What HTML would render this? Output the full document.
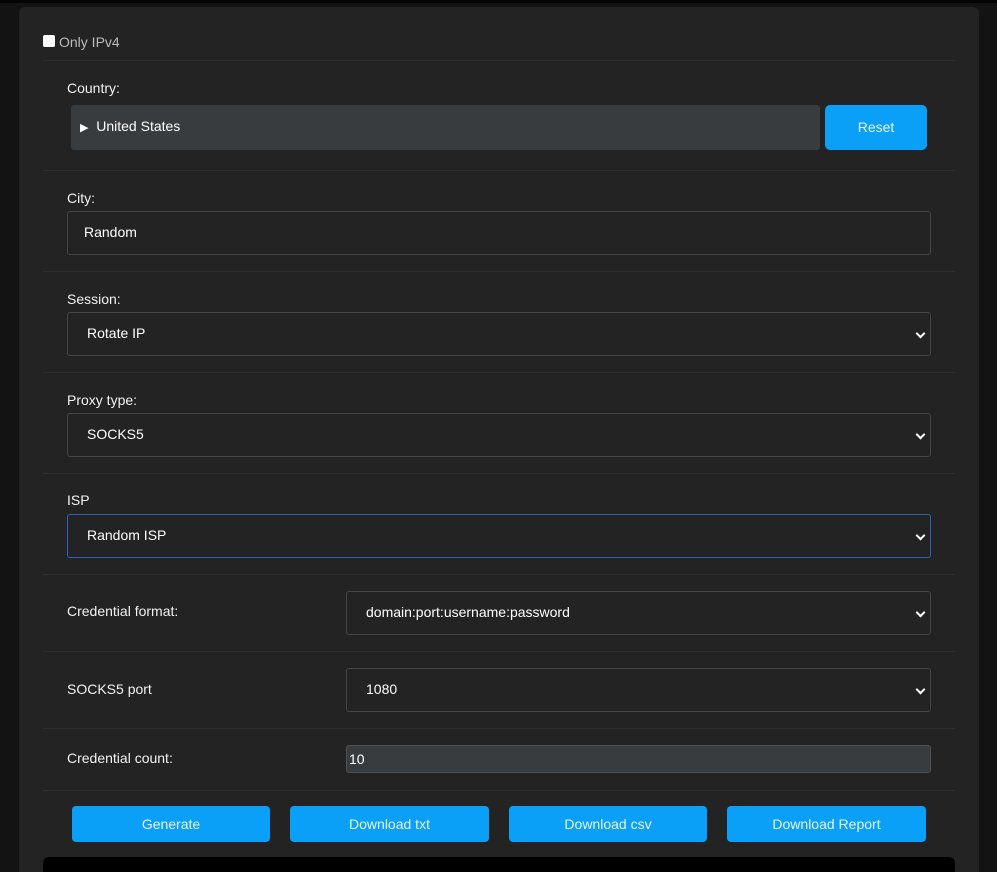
<!DOCTYPE html>
<html style="overflow:hidden;height:872px"><head><style>
*{box-sizing:border-box;margin:0;padding:0}
body{width:997px;height:872px;background:#131313;position:relative;overflow:hidden;font-family:"Liberation Sans",sans-serif;font-size:14px;color:#fff}
.a{position:absolute}
.panel{left:19px;top:7px;width:960px;height:865px;background:#232323;border-radius:6px 6px 0 0}
.line{left:43px;width:912px;height:1px;background:#2e2e2e}
.lbl{left:67px;line-height:16px;color:#f2f2f2}
.box{border:1px solid #454545;border-radius:3px;background:#232323;line-height:41px;padding-left:19px}
.sel::after{content:"";position:absolute;right:6px;top:17px;width:5px;height:5px;border-right:2px solid #fff;border-bottom:2px solid #fff;transform:rotate(45deg)}
.btn{background:#0aa0f7;border-radius:4px;text-align:center;color:#e8f6ff}
</style></head><body>
<div class="a" style="left:0;top:0;width:997px;height:3px;background:#050505"></div>
<div class="a panel"></div>
<div class="a" style="left:43px;top:35px;width:12px;height:12px;background:#fff;border-radius:2px"></div>
<div class="a" style="left:59px;top:34px;color:#bbb;line-height:16px">Only IPv4</div>
<div class="a line" style="top:60px"></div>
<div class="a lbl" style="top:80px">Country:</div>
<div class="a" style="left:71px;top:105px;width:749px;height:45px;background:#393c3f;border-radius:3px;line-height:43px;padding-left:9px"><span style="font-size:11px">▶</span>&nbsp; United States</div>
<div class="a btn" style="left:825px;top:105px;width:102px;height:45px;line-height:45px;border-radius:5px">Reset</div>
<div class="a line" style="top:170px"></div>
<div class="a lbl" style="top:190px">City:</div>
<div class="a box" style="left:67px;top:211px;width:864px;height:44px;padding-left:16px">Random</div>
<div class="a line" style="top:271px"></div>
<div class="a lbl" style="top:291px">Session:</div>
<div class="a box sel" style="left:67px;top:312px;width:864px;height:44px">Rotate IP</div>
<div class="a line" style="top:372px"></div>
<div class="a lbl" style="top:392px">Proxy type:</div>
<div class="a box sel" style="left:67px;top:413px;width:864px;height:44px">SOCKS5</div>
<div class="a line" style="top:473px"></div>
<div class="a lbl" style="top:492px">ISP</div>
<div class="a box sel" style="left:67px;top:514px;width:864px;height:44px;border-color:#2d64c0">Random ISP</div>
<div class="a line" style="top:574px"></div>
<div class="a lbl" style="top:603px">Credential format:</div>
<div class="a box sel" style="left:346px;top:591px;width:585px;height:44px">domain:port:username:password</div>
<div class="a line" style="top:651px"></div>
<div class="a lbl" style="top:681px">SOCKS5 port</div>
<div class="a box sel" style="left:346px;top:668px;width:585px;height:44px">1080</div>
<div class="a line" style="top:728px"></div>
<div class="a lbl" style="top:750px">Credential count:</div>
<div class="a" style="left:346px;top:745px;width:585px;height:28px;background:#393c3f;border:1px solid #505050;border-radius:3px;line-height:26px;padding-left:2px">10</div>
<div class="a line" style="top:790px"></div>
<div class="a btn" style="left:72px;top:806px;width:198px;height:36px;line-height:36px">Generate</div>
<div class="a btn" style="left:290px;top:806px;width:199px;height:36px;line-height:36px">Download txt</div>
<div class="a btn" style="left:509px;top:806px;width:198px;height:36px;line-height:36px">Download csv</div>
<div class="a btn" style="left:727px;top:806px;width:199px;height:36px;line-height:36px">Download Report</div>
<div class="a" style="left:43px;top:857px;width:912px;height:15px;background:#000;border-radius:6px 6px 0 0"></div>
</body></html>
